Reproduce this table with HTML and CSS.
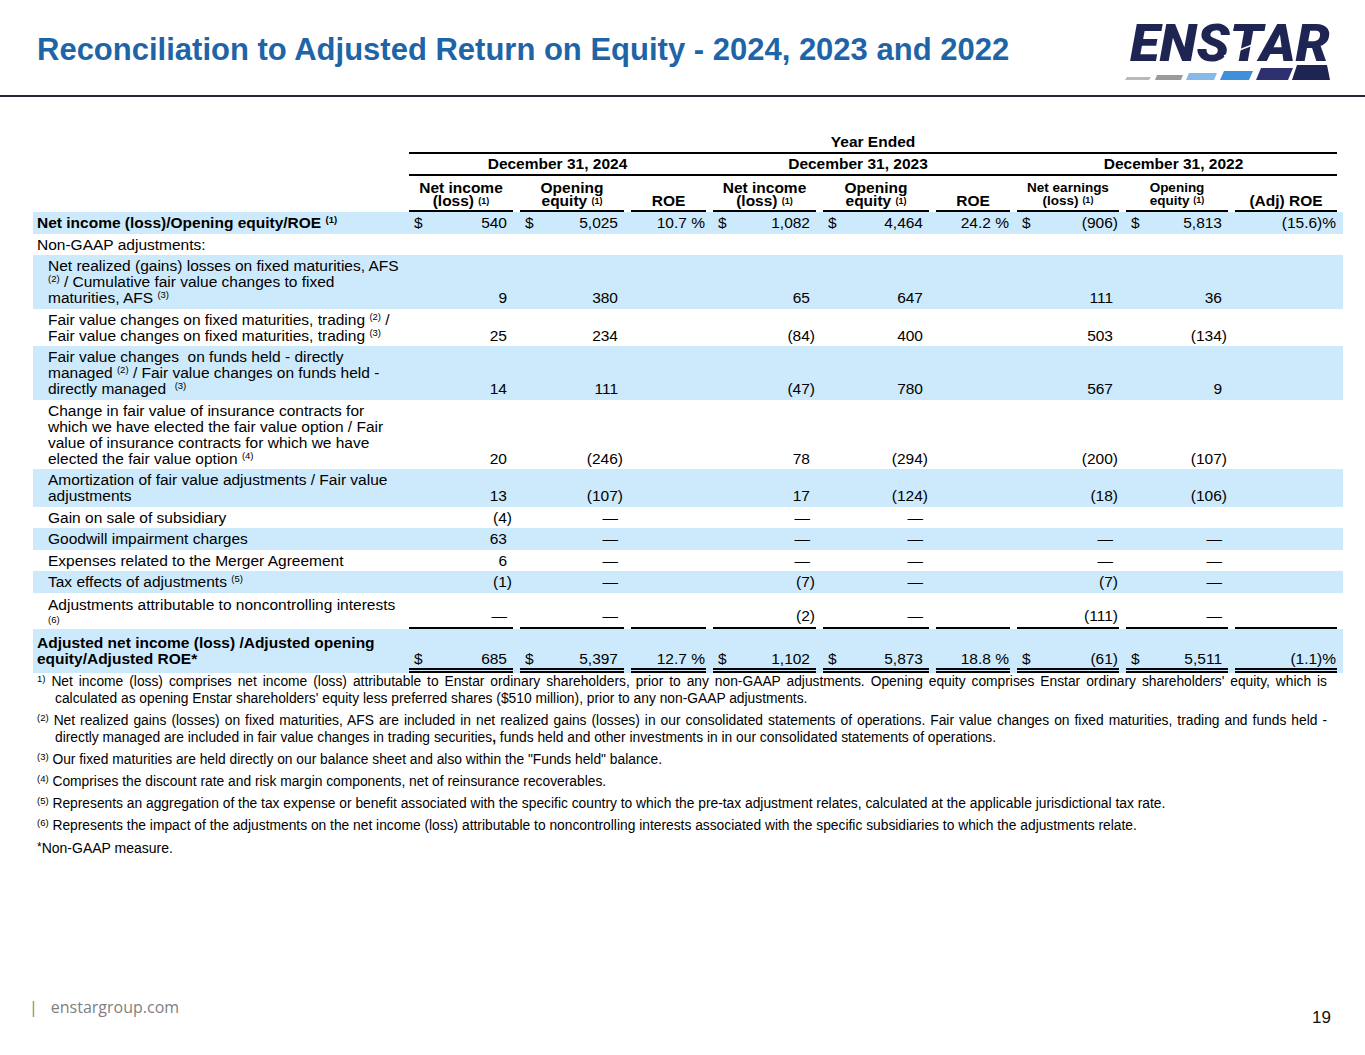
FILE: index.html
```html
<!DOCTYPE html>
<html lang="en">
<head>
<meta charset="utf-8">
<title>Reconciliation to Adjusted Return on Equity</title>
<link rel="stylesheet" href="styles.css">
</head>
<body>
<header class="top">
  <h1 class="title">Reconciliation to Adjusted Return on Equity - 2024, 2023 and 2022</h1>
  <svg class="logo" width="220" height="70" viewBox="0 0 220 70" overflow="visible" aria-label="Enstar">
    <text x="10" y="46" textLength="200" lengthAdjust="spacingAndGlyphs" class="logo-t">ENSTAR</text>
    <line x1="104" y1="41" x2="140" y2="27" stroke="#ffffff" stroke-width="1.4"/>
    <polygon points="5,65 7,62 31,62 29,65" fill="#b9b9bb"/>
    <polygon points="35,65 37,60 63,60 61,65" fill="#9b9b9f"/>
    <polygon points="66,65 69,58 97,58 94,65" fill="#86b8e8"/>
    <polygon points="100,65 104,56 133,56 129,65" fill="#3f8fdb"/>
    <polygon points="136,65 141,53 173,53 168,65" fill="#2e3070"/>
    <polygon points="172,65 177,50 207,50 210,65" fill="#1f2552"/>
  </svg>
</header>

<main class="content">
  <table class="recon">
    <colgroup>
      <col class="w-lab"><col class="w-a"><col class="w-b"><col class="w-c"><col class="w-d"><col class="w-e"><col class="w-f"><col class="w-g"><col class="w-h"><col class="w-i"><col class="w-end">
    </colgroup>
    <tbody>
      <tr class="hd">
        <td></td>
        <td class="c" colspan="9"><div class="yr">Year Ended</div></td>
        <td></td>
      </tr>
      <tr class="hd">
        <td></td>
        <td class="c" colspan="3"><div class="dh">December 31, 2024</div></td>
        <td class="c0" colspan="3"><div class="dh">December 31, 2023</div></td>
        <td class="c0" colspan="3"><div class="dh">December 31, 2022</div></td>
        <td></td>
      </tr>
      <tr class="hd ch">
        <td></td>
        <td class="c"><div class="h">Net income<br>(loss) <sup>(1)</sup></div></td>
        <td class="c"><div class="h">Opening<br>equity <sup>(1)</sup></div></td>
        <td class="c"><div class="h">ROE</div></td>
        <td class="c"><div class="h">Net income<br>(loss) <sup>(1)</sup></div></td>
        <td class="c"><div class="h">Opening<br>equity <sup>(1)</sup></div></td>
        <td class="c"><div class="h">ROE</div></td>
        <td class="c"><div class="h sm">Net earnings<br>(loss) <sup>(1)</sup></div></td>
        <td class="c"><div class="h sm">Opening<br>equity <sup>(1)</sup></div></td>
        <td class="c"><div class="h">(Adj) ROE</div></td>
        <td></td>
      </tr>

      <tr class="hl">
        <td class="lab b">Net income (loss)/Opening equity/ROE <sup>(1)</sup></td>
        <td class="c"><div class="v"><span class="cur">$</span><span class="num">540</span></div></td>
        <td class="c"><div class="v"><span class="cur">$</span><span class="num">5,025</span></div></td>
        <td class="c"><div class="v r"><span class="num">10.7 %</span></div></td>
        <td class="c"><div class="v"><span class="cur">$</span><span class="num">1,082</span></div></td>
        <td class="c"><div class="v"><span class="cur">$</span><span class="num">4,464</span></div></td>
        <td class="c"><div class="v r"><span class="num">24.2 %</span></div></td>
        <td class="c"><div class="v"><span class="cur">$</span><span class="num ng">(906)</span></div></td>
        <td class="c"><div class="v"><span class="cur">$</span><span class="num">5,813</span></div></td>
        <td class="c"><div class="v r"><span class="num">(15.6)%</span></div></td>
        <td></td>
      </tr>

      <tr>
        <td class="lab">Non-GAAP adjustments:</td>
        <td></td><td></td><td></td><td></td><td></td><td></td><td></td><td></td><td></td><td></td>
      </tr>

      <tr class="hl">
        <td class="lab ind">Net realized (gains) losses on fixed maturities, AFS<br><sup>(2)</sup> / Cumulative fair value changes to fixed<br>maturities, AFS <sup>(3)</sup></td>
        <td class="c"><div class="v"><span class="num">9</span></div></td>
        <td class="c"><div class="v"><span class="num">380</span></div></td>
        <td></td>
        <td class="c"><div class="v"><span class="num">65</span></div></td>
        <td class="c"><div class="v"><span class="num">647</span></div></td>
        <td></td>
        <td class="c"><div class="v"><span class="num">111</span></div></td>
        <td class="c"><div class="v"><span class="num">36</span></div></td>
        <td></td><td></td>
      </tr>

      <tr>
        <td class="lab ind">Fair value changes on fixed maturities, trading <sup>(2)</sup> /<br>Fair value changes on fixed maturities, trading <sup>(3)</sup></td>
        <td class="c"><div class="v"><span class="num">25</span></div></td>
        <td class="c"><div class="v"><span class="num">234</span></div></td>
        <td></td>
        <td class="c"><div class="v"><span class="num ng">(84)</span></div></td>
        <td class="c"><div class="v"><span class="num">400</span></div></td>
        <td></td>
        <td class="c"><div class="v"><span class="num">503</span></div></td>
        <td class="c"><div class="v"><span class="num ng">(134)</span></div></td>
        <td></td><td></td>
      </tr>

      <tr class="hl">
        <td class="lab ind">Fair value changes &nbsp;on funds held - directly<br>managed <sup>(2)</sup> / Fair value changes on funds held -<br>directly managed &nbsp;<sup>(3)</sup></td>
        <td class="c"><div class="v"><span class="num">14</span></div></td>
        <td class="c"><div class="v"><span class="num">111</span></div></td>
        <td></td>
        <td class="c"><div class="v"><span class="num ng">(47)</span></div></td>
        <td class="c"><div class="v"><span class="num">780</span></div></td>
        <td></td>
        <td class="c"><div class="v"><span class="num">567</span></div></td>
        <td class="c"><div class="v"><span class="num">9</span></div></td>
        <td></td><td></td>
      </tr>

      <tr>
        <td class="lab ind">Change in fair value of insurance contracts for<br>which we have elected the fair value option / Fair<br>value of insurance contracts for which we have<br>elected the fair value option <sup>(4)</sup></td>
        <td class="c"><div class="v"><span class="num">20</span></div></td>
        <td class="c"><div class="v"><span class="num ng">(246)</span></div></td>
        <td></td>
        <td class="c"><div class="v"><span class="num">78</span></div></td>
        <td class="c"><div class="v"><span class="num ng">(294)</span></div></td>
        <td></td>
        <td class="c"><div class="v"><span class="num ng">(200)</span></div></td>
        <td class="c"><div class="v"><span class="num ng">(107)</span></div></td>
        <td></td><td></td>
      </tr>

      <tr class="hl">
        <td class="lab ind">Amortization of fair value adjustments / Fair value<br>adjustments</td>
        <td class="c"><div class="v"><span class="num">13</span></div></td>
        <td class="c"><div class="v"><span class="num ng">(107)</span></div></td>
        <td></td>
        <td class="c"><div class="v"><span class="num">17</span></div></td>
        <td class="c"><div class="v"><span class="num ng">(124)</span></div></td>
        <td></td>
        <td class="c"><div class="v"><span class="num ng">(18)</span></div></td>
        <td class="c"><div class="v"><span class="num ng">(106)</span></div></td>
        <td></td><td></td>
      </tr>

      <tr>
        <td class="lab ind">Gain on sale of subsidiary</td>
        <td class="c"><div class="v"><span class="num ng">(4)</span></div></td>
        <td class="c"><div class="v"><span class="num">—</span></div></td>
        <td></td>
        <td class="c"><div class="v"><span class="num">—</span></div></td>
        <td class="c"><div class="v"><span class="num">—</span></div></td>
        <td></td><td></td><td></td><td></td><td></td>
      </tr>

      <tr class="hl">
        <td class="lab ind">Goodwill impairment charges</td>
        <td class="c"><div class="v"><span class="num">63</span></div></td>
        <td class="c"><div class="v"><span class="num">—</span></div></td>
        <td></td>
        <td class="c"><div class="v"><span class="num">—</span></div></td>
        <td class="c"><div class="v"><span class="num">—</span></div></td>
        <td></td>
        <td class="c"><div class="v"><span class="num">—</span></div></td>
        <td class="c"><div class="v"><span class="num">—</span></div></td>
        <td></td><td></td>
      </tr>

      <tr>
        <td class="lab ind">Expenses related to the Merger Agreement</td>
        <td class="c"><div class="v"><span class="num">6</span></div></td>
        <td class="c"><div class="v"><span class="num">—</span></div></td>
        <td></td>
        <td class="c"><div class="v"><span class="num">—</span></div></td>
        <td class="c"><div class="v"><span class="num">—</span></div></td>
        <td></td>
        <td class="c"><div class="v"><span class="num">—</span></div></td>
        <td class="c"><div class="v"><span class="num">—</span></div></td>
        <td></td><td></td>
      </tr>

      <tr class="hl">
        <td class="lab ind">Tax effects of adjustments <sup>(5)</sup></td>
        <td class="c"><div class="v"><span class="num ng">(1)</span></div></td>
        <td class="c"><div class="v"><span class="num">—</span></div></td>
        <td></td>
        <td class="c"><div class="v"><span class="num ng">(7)</span></div></td>
        <td class="c"><div class="v"><span class="num">—</span></div></td>
        <td></td>
        <td class="c"><div class="v"><span class="num ng">(7)</span></div></td>
        <td class="c"><div class="v"><span class="num">—</span></div></td>
        <td></td><td></td>
      </tr>

      <tr class="nci">
        <td class="lab ind">Adjustments attributable to noncontrolling interests<div class="subn">(6)</div></td>
        <td class="c"><div class="v u1"><span class="num">—</span></div></td>
        <td class="c"><div class="v u1"><span class="num">—</span></div></td>
        <td class="c"><div class="v u1 r"><span class="num">&nbsp;</span></div></td>
        <td class="c"><div class="v u1"><span class="num ng">(2)</span></div></td>
        <td class="c"><div class="v u1"><span class="num">—</span></div></td>
        <td class="c"><div class="v u1 r"><span class="num">&nbsp;</span></div></td>
        <td class="c"><div class="v u1"><span class="num ng">(111)</span></div></td>
        <td class="c"><div class="v u1"><span class="num">—</span></div></td>
        <td class="c"><div class="v u1 r"><span class="num">&nbsp;</span></div></td>
        <td></td>
      </tr>

      <tr class="hl tot">
        <td class="lab b">Adjusted net income (loss) /Adjusted opening<br>equity/Adjusted ROE*</td>
        <td class="c"><div class="v u2"><span class="cur">$</span><span class="num">685</span></div></td>
        <td class="c"><div class="v u2"><span class="cur">$</span><span class="num">5,397</span></div></td>
        <td class="c"><div class="v u2 r"><span class="num">12.7 %</span></div></td>
        <td class="c"><div class="v u2"><span class="cur">$</span><span class="num">1,102</span></div></td>
        <td class="c"><div class="v u2"><span class="cur">$</span><span class="num">5,873</span></div></td>
        <td class="c"><div class="v u2 r"><span class="num">18.8 %</span></div></td>
        <td class="c"><div class="v u2"><span class="cur">$</span><span class="num ng">(61)</span></div></td>
        <td class="c"><div class="v u2"><span class="cur">$</span><span class="num">5,511</span></div></td>
        <td class="c"><div class="v u2 r"><span class="num">(1.1)%</span></div></td>
        <td></td>
      </tr>
    </tbody>
  </table>

  <div class="notes">
    <p class="fn"><span class="ln j"><sup>1)</sup> Net income (loss) comprises net income (loss) attributable to Enstar ordinary shareholders, prior to any non-GAAP adjustments. Opening equity comprises Enstar ordinary shareholders' equity, which is</span><span class="ln">calculated as opening Enstar shareholders' equity less preferred shares ($510 million), prior to any non-GAAP adjustments.</span></p>
    <p class="fn"><span class="ln j"><sup>(2)</sup> Net realized gains (losses) on fixed maturities, AFS are included in net realized gains (losses) in our consolidated statements of operations. Fair value changes on fixed maturities, trading and funds held -</span><span class="ln">directly managed are included in fair value changes in trading securities<b>,</b> funds held and other investments in in our consolidated statements of operations.</span></p>
    <p class="fn"><sup>(3)</sup> Our fixed maturities are held directly on our balance sheet and also within the "Funds held" balance.</p>
    <p class="fn"><sup>(4)</sup> Comprises the discount rate and risk margin components, net of reinsurance recoverables.</p>
    <p class="fn"><sup>(5)</sup> Represents an aggregation of the tax expense or benefit associated with the specific country to which the pre-tax adjustment relates, calculated at the applicable jurisdictional tax rate.</p>
    <p class="fn"><sup>(6)</sup> Represents the impact of the adjustments on the net income (loss) attributable to noncontrolling interests associated with the specific subsidiaries to which the adjustments relate.</p>
    <p class="ng-note"><sup>*</sup>Non-GAAP measure.</p>
  </div>
</main>

<footer class="foot">
  <div class="site"><span class="bar">|</span>enstargroup.com</div>
  <div class="page">19</div>
</footer>
</body>
</html>
```

FILE: styles.css
```css
* { box-sizing: border-box; }

html, body { margin: 0; padding: 0; }

body {
  width: 1365px;
  height: 1055px;
  overflow: hidden;
  background: #ffffff;
  color: #000000;
  font-family: "Liberation Sans", Arial, sans-serif;
  display: flex;
  flex-direction: column;
}

/* ---------- header ---------- */
.top {
  flex: none;
  height: 97px;
  border-bottom: 2px solid #23233a;
  display: flex;
  justify-content: space-between;
  align-items: flex-start;
  padding: 0 25px 0 37px;
}

.title {
  margin: 0;
  padding-top: 32px;
  font-size: 31px;
  line-height: 36px;
  font-weight: 700;
  color: #1e64a6;
  white-space: nowrap;
}

.logo {
  display: block;
  margin-top: 15px;
}

.logo-t {
  font-family: Roboto, "Liberation Sans", sans-serif;
  font-weight: 900;
  font-style: italic;
  font-size: 52px;
  fill: #1f2552;
}

/* ---------- table ---------- */
.content {
  flex: none;
  padding: 33px 0 0 33px;
}

.recon {
  border-collapse: collapse;
  table-layout: fixed;
  width: 1310px;
  font-size: 15.5px;
  line-height: 16px;
}

.w-lab { width: 369px; }
.w-a { width: 111px; }
.w-b { width: 111px; }
.w-c { width: 82px; }
.w-d { width: 110px; }
.w-e { width: 113px; }
.w-f { width: 81px; }
.w-g { width: 109px; }
.w-h { width: 109px; }
.w-i { width: 109px; }
.w-end { width: 6px; }

.recon td {
  padding: 0;
  vertical-align: bottom;
}

.recon td.c { padding-left: 7px; }
.recon td.c0 { padding-left: 0; }

.recon tr.hl td { background: #cdeafc; }

.recon td.lab {
  vertical-align: top;
  white-space: nowrap;
  padding: 3px 4px 2.5px 4px;
}
.recon td.lab.ind { padding-left: 15px; }
.recon td.lab.b { font-weight: 700; }

.recon sup {
  font-size: 9.5px;
  line-height: 0;
  vertical-align: 5px;
}

.subn {
  font-size: 9.5px;
  line-height: 14px;
}

.nci td.lab { padding-top: 4px; }

/* header rows */
.hd td { font-weight: 700; text-align: center; }

.yr {
  border-bottom: 2px solid #000;
  padding: 4px 0 2px;
  line-height: 16px;
}

.dh {
  border-bottom: 2px solid #000;
  padding: 2px 0 2px;
  line-height: 16px;
}

.ch { height: 36px; }

.h {
  border-bottom: 2px solid #000;
  line-height: 13px;
  padding-bottom: 3px;
  text-align: center;
}
.h.sm { font-size: 13.5px; line-height: 12.5px; }
.h sup { vertical-align: 2px; font-size: 9px; }

/* values */
.v {
  display: flex;
  align-items: flex-end;
  padding: 3px 6px 2.5px 0;
  white-space: nowrap;
}
.v.r { padding-right: 1px; }
.v .cur { padding-left: 5px; }
.v .num { margin-left: auto; }
.v .ng { margin-right: -5px; }

.u1 {
  border-bottom: 2px solid #000;
  padding-bottom: 3px;
}

.tot td.lab {
  padding-top: 6px;
  padding-bottom: 6px;
}
.u2 {
  border-bottom: 5px double #000;
  padding-bottom: 1px;
}

/* ---------- notes ---------- */
.notes {
  width: 1294px;
  padding-left: 4px;
  margin-top: 0;
  font-size: 13.8px;
  line-height: 17px;
}

.fn {
  margin: 0 0 5px;
  padding-left: 18px;
  text-indent: -18px;
}

.fn .ln { display: block; text-indent: 0; }
.fn .ln.j {
  text-indent: -18px;
  text-align: justify;
  text-align-last: justify;
}

.fn sup {
  font-size: 9.5px;
  line-height: 0;
  vertical-align: 4px;
}

.ng-note {
  margin: 0;
  font-size: 14px;
  line-height: 18px;
}
.ng-note sup { font-size: 12px; line-height: 0; vertical-align: 2px; }

/* ---------- footer ---------- */
.foot {
  margin-top: auto;
  height: 65px;
  display: flex;
  justify-content: space-between;
  align-items: flex-start;
  padding: 0 34px 0 29px;
}

.site {
  margin-top: 7px;
  font-family: "Open Sans", "Liberation Sans", sans-serif;
  font-size: 16px;
  line-height: 20px;
  color: #7f7f7f;
}
.site .bar { margin-right: 13px; }

.page {
  margin-top: 18px;
  font-size: 17px;
  line-height: 20px;
  color: #111;
}
```
